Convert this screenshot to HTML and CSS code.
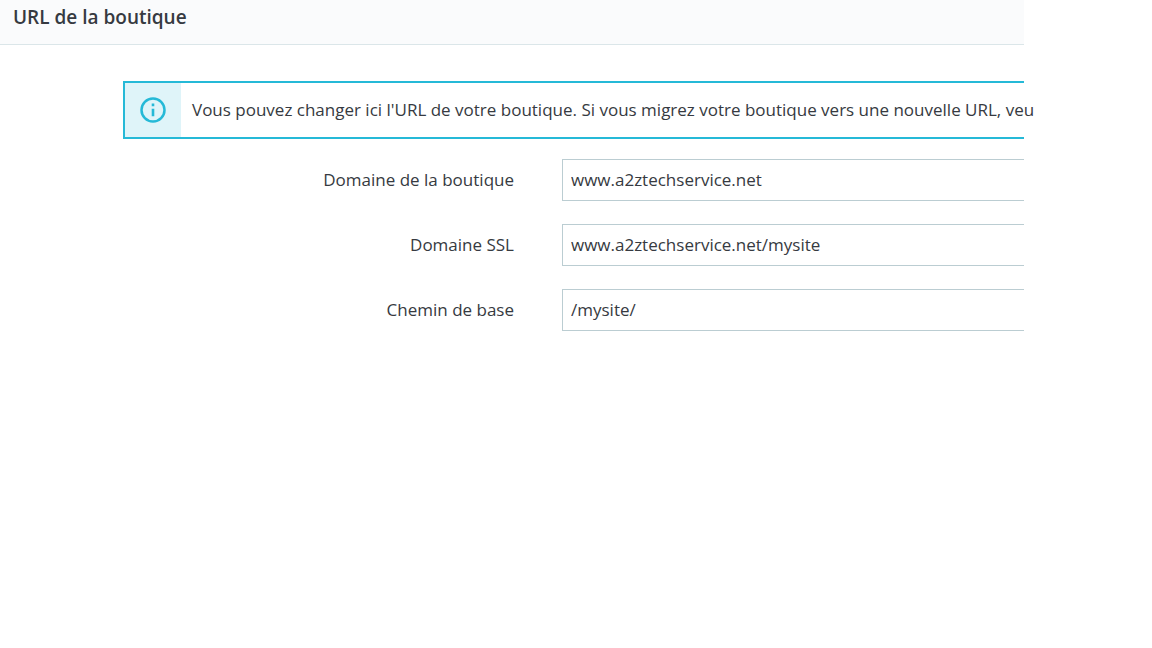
FILE: index.html
```
<!DOCTYPE html>
<html lang="fr">
<head>
    <meta charset="UTF-8">
    <meta name="viewport" content="width=device-width, initial-scale=1.0">
    <title>URL de la boutique</title>
    <link rel="stylesheet" href="styles.css">
</head>
<body>
    <main class="panel">
        <!-- Panel heading -->
        <h1 class="panel-header">URL de la boutique</h1>

        <div class="panel-body">
            <!-- Info message -->
            <div class="alert" role="alert">
                <div class="alert-icon">
                    <svg viewBox="0 0 26 26" width="26" height="26" aria-hidden="true">
                        <circle cx="13" cy="13" r="11.5" fill="none" stroke="currentColor" stroke-width="2.5"/>
                        <path d="M11.7 6.6h2.6v2.6h-2.6zM11.7 11.7h2.6v7.6h-2.6z" fill="currentColor"/>
                    </svg>
                </div>
                <p class="alert-text">Vous pouvez changer ici l'URL de votre boutique. Si vous migrez votre boutique vers une nouvelle URL, veu</p>
            </div>

            <!-- Shop URL form -->
            <form class="url-form">
                <div class="form-row">
                    <label for="domain">Domaine de la boutique</label>
                    <input type="text" id="domain" value="www.a2ztechservice.net">
                </div>
                <div class="form-row">
                    <label for="domainSsl">Domaine SSL</label>
                    <input type="text" id="domainSsl" value="www.a2ztechservice.net/mysite">
                </div>
                <div class="form-row">
                    <label for="baseUri">Chemin de base</label>
                    <input type="text" id="baseUri" value="/mysite/">
                </div>
            </form>
        </div>
    </main>
</body>
</html>
```
FILE: styles.css
```
* {
    box-sizing: border-box;
}

body {
    margin: 0;
    background-color: #fff;
    color: #363a41;
    font-family: "Open Sans", "Noto Sans", sans-serif;
    font-size: 17px;
    line-height: 24px;
}

/* Panel stops short of the right side of the window */
.panel {
    margin-right: 128px;
}

.panel-header {
    margin: 0;
    padding: 5px 13px 15px;
    background-color: #fafbfc;
    border-bottom: 1px solid #dbe6e9;
    font-size: 19px;
    font-weight: 600;
    line-height: 24px;
}

.panel-body {
    padding: 36px 0 36px 123px;
}

/* Info message */
.alert {
    display: flex;
    border: 2px solid #25b9d7;
    border-right: none;
}

.alert-icon {
    display: flex;
    flex: none;
    align-items: center;
    justify-content: center;
    width: 56px;
    background-color: #dff4f9;
    color: #25b9d7;
}

/* The message stays on one line */
.alert-text {
    margin: 0;
    padding: 15px 0 15px 11px;
    white-space: nowrap;
}

/* Form rows */
.url-form {
    display: grid;
    gap: 23px;
    margin-top: 20px;
}

.form-row {
    display: grid;
    grid-template-columns: 391px 1fr;
    align-items: center;
    gap: 48px;
}

.form-row label {
    text-align: right;
}

.form-row input {
    width: 100%;
    height: 42px;
    padding: 7px 8px 9px;
    background-color: #fff;
    border: 1px solid #bbcdd2;
    border-right: none;
    border-radius: 0;
    color: inherit;
    font: inherit;
}

.form-row input:focus {
    border-color: #25b9d7;
    outline: none;
}
```
